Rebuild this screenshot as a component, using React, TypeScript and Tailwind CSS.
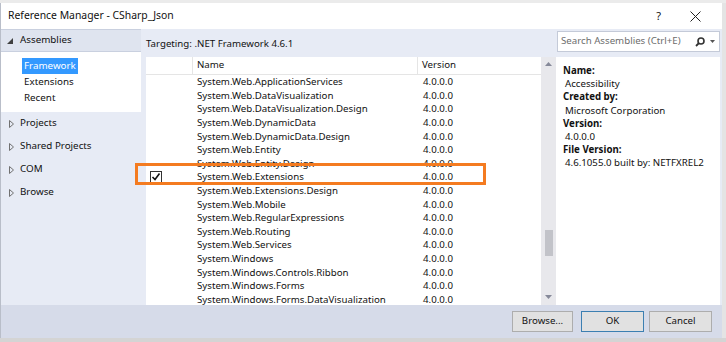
import React from 'react';

const rows = [
  'System.Web.ApplicationServices',
  'System.Web.DataVisualization',
  'System.Web.DataVisualization.Design',
  'System.Web.DynamicData',
  'System.Web.DynamicData.Design',
  'System.Web.Entity',
  'System.Web.Entity.Design',
  'System.Web.Extensions',
  'System.Web.Extensions.Design',
  'System.Web.Mobile',
  'System.Web.RegularExpressions',
  'System.Web.Routing',
  'System.Web.Services',
  'System.Windows',
  'System.Windows.Controls.Ribbon',
  'System.Windows.Forms',
  'System.Windows.Forms.DataVisualization',
];

const details = [
  { label: 'Name:', value: 'Accessibility' },
  { label: 'Created by:', value: 'Microsoft Corporation' },
  { label: 'Version:', value: '4.0.0.0' },
  { label: 'File Version:', value: '4.6.1055.0 built by: NETFXREL2' },
];

function Collapsed() {
  return (
    <svg width="5" height="8" viewBox="0 0 5 8" className="shrink-0">
      <path d="M0.5 0.5 L4.5 4 L0.5 7.5 Z" fill="none" stroke="#717171" strokeWidth="1" />
    </svg>
  );
}

function Expanded() {
  return (
    <svg width="6" height="6" viewBox="0 0 6 6" className="shrink-0">
      <path d="M6 0 L6 6 L0 6 Z" fill="#404040" />
    </svg>
  );
}

function CheckBox() {
  return (
    <svg width="12" height="12" viewBox="0 0 12 12">
      <rect x="0.5" y="0.5" width="11" height="11" fill="#fff" stroke="#333" />
      <path d="M2.5 6 L5 8.5 L9.5 2.5" fill="none" stroke="#111" strokeWidth="1.6" />
    </svg>
  );
}

export default function App() {
  return (
    <div
      className="relative w-[726px] h-[342px] overflow-hidden bg-[#dcdcdc] flex flex-col text-[9.7px] text-[#111] whitespace-nowrap"
      style={{ fontFamily: '"Noto Sans", "Segoe UI", sans-serif' }}
    >
      <div className="h-[3px] bg-[#ebebeb]" />
      <div className="flex flex-1 min-h-0">
        <div className="w-[722px] flex flex-col bg-white border-l border-[#b9bec9]">
          {/* Title bar */}
          <div className="h-[26px] flex items-center px-[7px]">
            <span className="text-[10.4px]">Reference Manager - CSharp_Json</span>
            <span className="ml-auto mr-[29px] text-[11px]">?</span>
            <svg width="11" height="11" viewBox="0 0 11 11" className="mr-[14px]">
              <path d="M0.5 0.5 L10.5 10.5 M10.5 0.5 L0.5 10.5" stroke="#222" strokeWidth="1" />
            </svg>
          </div>

          {/* Body */}
          <div className="flex-1 flex bg-[#e7ebf5] pr-[2px] min-h-0">
            {/* Left nav */}
            <div className="w-[140px] flex flex-col">
              <div className="h-[23px] flex items-center gap-[7px] pl-[6px] bg-[#dfe4ef] border-y border-[#c9d0df]">
                <Expanded />
                <span className="text-[9.8px]">Assemblies</span>
              </div>
              <div className="bg-white pt-[6px] h-[60px] flex flex-col text-[9.8px]">
                <div className="h-[16px] flex items-center pl-[21px]">
                  <span className="bg-[#3399ff] text-white px-[2px] leading-[16px]">Framework</span>
                </div>
                <div className="h-[16px] flex items-center pl-[23px]">Extensions</div>
                <div className="h-[16px] flex items-center pl-[23px]">Recent</div>
              </div>
              {['Projects', 'Shared Projects', 'COM', 'Browse'].map((t) => (
                <div key={t} className="h-[23px] flex items-center gap-[6px] pl-[8px] text-[9.8px]">
                  <Collapsed />
                  <span>{t}</span>
                </div>
              ))}
            </div>

            {/* Main */}
            <div className="flex-1 flex flex-col pl-[5px]">
              <div className="h-[28px] flex items-start">
                <span className="mt-[8px] leading-[14px]">Targeting: .NET Framework 4.6.1</span>
                <div className="ml-auto mt-[2px] w-[163px] h-[21px] bg-white border border-[#c4cad8] flex items-center pl-[3px] pr-[4px]">
                  <span className="text-[#6d6d6d]">Search Assemblies (Ctrl+E)</span>
                  <svg width="10" height="10" viewBox="0 0 10 10" className="ml-auto">
                    <circle cx="6" cy="4" r="3" fill="none" stroke="#333" strokeWidth="1.6" />
                    <path d="M4 6 L1 9" stroke="#333" strokeWidth="1.8" />
                  </svg>
                  <svg width="5" height="3" viewBox="0 0 5 3" className="ml-[5px]">
                    <path d="M0 0 L5 0 L2.5 3 Z" fill="#555" />
                  </svg>
                </div>
              </div>
              <div className="flex-1 flex min-h-0">
                {/* Grid */}
                <div className="w-[395px] bg-white flex flex-col overflow-hidden">
                  <div className="h-[18px] shrink-0 flex border-b border-[#e5e5e5]">
                    <div className="w-[47px] border-r border-[#e5e5e5]" />
                    <div className="w-[225px] border-r border-[#e5e5e5] flex items-center pl-[4px]">Name</div>
                    <div className="flex-1 flex items-center pl-[4px]">Version</div>
                  </div>
                  {rows.map((r, i) => (
                    <div key={r} className="h-[13.6px] shrink-0 flex items-center">
                      <div className="w-[47px] flex items-center pl-[4px]">{i === 7 && <CheckBox />}</div>
                      <div className="w-[225px] pl-[4px] leading-[13px]">{r}</div>
                      <div className="flex-1 pl-[5px] leading-[13px]">4.0.0.0</div>
                    </div>
                  ))}
                </div>

                {/* Scrollbar */}
                <div className="w-[15px] bg-[#e8e8ec] flex flex-col items-center">
                  <svg width="7" height="4" viewBox="0 0 7 4" className="mt-[5px]">
                    <path d="M0 4 L7 4 L3.5 0 Z" fill="#868999" />
                  </svg>
                  <div className="mt-[164px] w-[8px] h-[26px] bg-[#c2c3c9]" />
                  <svg width="7" height="4" viewBox="0 0 7 4" className="mt-auto mb-[6px]">
                    <path d="M0 0 L7 0 L3.5 4 Z" fill="#868999" />
                  </svg>
                </div>

                {/* Details */}
                <div className="flex-1 bg-white pl-[7px] pt-[7px] flex flex-col">
                  {details.map((d) => (
                    <div key={d.label} className="flex flex-col">
                      <span className="font-bold leading-[13.2px]">{d.label}</span>
                      <span className="pl-[2px] leading-[13.2px]">{d.value}</span>
                    </div>
                  ))}
                </div>
              </div>
            </div>
          </div>

          {/* Footer */}
          <div className="h-[33px] bg-[#d6dbe9] flex items-center justify-end pr-[10px]">
            <button className="w-[61px] h-[21px] bg-[#e1e1e1] border border-[#adadad]">Browse...</button>
            <button className="ml-[8px] w-[63px] h-[21px] bg-[#e1e1e1] border border-[#3c7fb1]">OK</button>
            <button className="ml-[5px] w-[63px] h-[21px] bg-[#e1e1e1] border border-[#adadad]">Cancel</button>
          </div>
        </div>
        <div className="flex-1 bg-[#e4e4e4]" />
      </div>
      <div className="h-[4px] bg-[#d4d4d4]" />

      {/* Orange highlight annotation */}
      <div className="absolute left-[135px] top-[163px] w-[351px] h-[22px] border-[3px] border-[#f47b20]" />
    </div>
  );
}
